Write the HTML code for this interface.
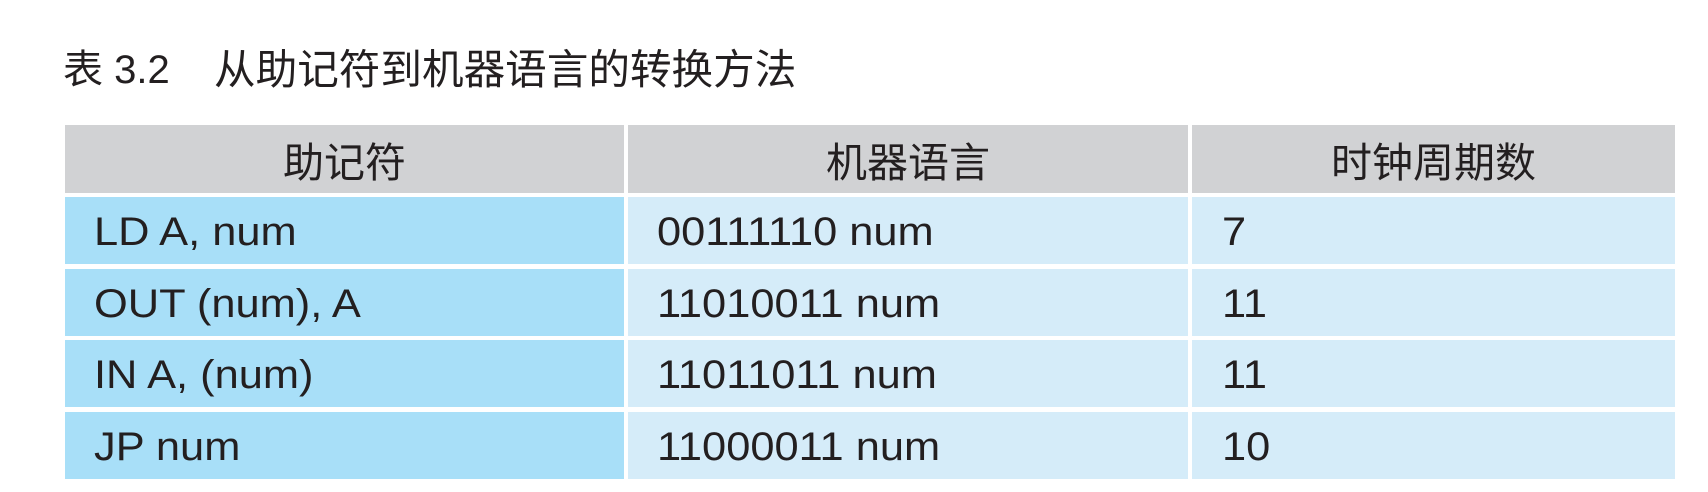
<!DOCTYPE html>
<html><head><meta charset="utf-8"><style>
body{margin:0;width:1708px;height:492px;background:#fff;position:relative;overflow:hidden;font-family:"Liberation Sans","Noto Sans CJK SC",sans-serif;color:#231f20}
.t{position:absolute;top:45px;font-size:40px;line-height:50px;white-space:nowrap}
.c{position:absolute;display:flex;align-items:center;font-size:40px;box-sizing:border-box}
.c span{display:inline-block;transform:scaleX(1.085);transform-origin:left center;padding-top:3px}
.h{background:#d1d2d4;justify-content:center;font-size:41px;top:125px;height:68px}
.a{background:#a8dff8;left:65px;width:559px;padding-left:29px}
.b{background:#d5ecf9;left:628px;width:560px;padding-left:29px}
.d{background:#d5ecf9;left:1192px;width:483px;padding-left:30px}
</style></head><body>
<div class="t" style="left:63px">表 3.2</div>
<div class="t" style="left:214px;font-size:41.6px">从助记符到机器语言的转换方法</div>
<div class="c h" style="left:65px;width:559px">助记符</div>
<div class="c h" style="left:628px;width:560px">机器语言</div>
<div class="c h" style="left:1192px;width:483px">时钟周期数</div>

<div class="c a" style="top:197px;height:67px"><span>LD A, num</span></div>
<div class="c b" style="top:197px;height:67px"><span>00111110 num</span></div>
<div class="c d" style="top:197px;height:67px"><span>7</span></div>

<div class="c a" style="top:269px;height:67px"><span>OUT (num), A</span></div>
<div class="c b" style="top:269px;height:67px"><span>11010011 num</span></div>
<div class="c d" style="top:269px;height:67px"><span>11</span></div>

<div class="c a" style="top:340px;height:67px"><span>IN A, (num)</span></div>
<div class="c b" style="top:340px;height:67px"><span>11011011 num</span></div>
<div class="c d" style="top:340px;height:67px"><span>11</span></div>

<div class="c a" style="top:412px;height:67px"><span>JP num</span></div>
<div class="c b" style="top:412px;height:67px"><span>11000011 num</span></div>
<div class="c d" style="top:412px;height:67px"><span>10</span></div>
</body></html>
